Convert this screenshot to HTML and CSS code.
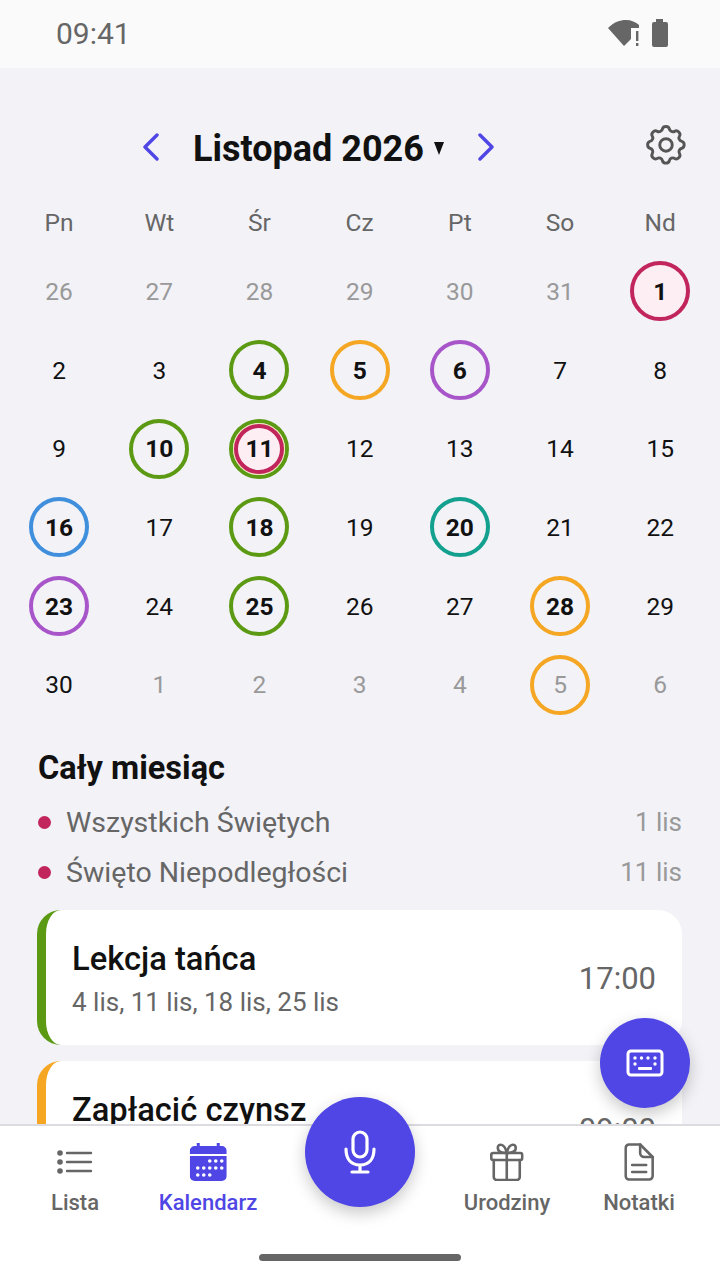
FILE: index.html
```html
<!DOCTYPE html>
<html>
<head>
  <meta charset="utf-8">
  <title>Kalendarz</title>
  <link rel="stylesheet" href="styles.css">
</head>
<body>
<div class="app">
  <div class="statusbar">
    <span class="clock">09:41</span>
    <div class="status-icons">
      <svg width="33" height="28" viewBox="0 0 33 28"><path d="M0 9C6 3 12 1 18 1c5 0 10 2 13 5v3h-8v11l-7 7Z" fill="#666"/><rect x="28" y="12" width="2.4" height="10" fill="#666"/><rect x="28" y="24" width="2.4" height="3" fill="#666"/></svg>
      <svg width="18" height="29" viewBox="0 0 18 29"><path d="M5 0h7v3h3a2 2 0 0 1 2 2v21a2 2 0 0 1-2 2H3a2 2 0 0 1-2-2V5a2 2 0 0 1 2-2h2Z" fill="#666"/></svg>
    </div>
  </div>

  <div class="main">
    <div class="cal-header">
      <div class="month-nav">
        <svg class="chev" width="16" height="28" viewBox="0 0 16 28"><path d="M14 2 2 14l12 12" fill="none" stroke="#4f46e5" stroke-width="3.4" stroke-linecap="round" stroke-linejoin="round"/></svg>
        <div class="month-title">Listopad 2026 <span class="caret"></span></div>
        <svg class="chev" width="16" height="28" viewBox="0 0 16 28"><path d="M2 2l12 12L2 26" fill="none" stroke="#4f46e5" stroke-width="3.4" stroke-linecap="round" stroke-linejoin="round"/></svg>
      </div>
      <svg class="gear" width="50" height="50" viewBox="0 0 24 24" fill="none" stroke="#555" stroke-width="1.4" stroke-linecap="round" stroke-linejoin="round"><path d="M10.3 3.3c.4-1.5 2.9-1.5 3.3 0a1.7 1.7 0 0 0 2.6 1.1c1.3-.8 3.1 1 2.3 2.3a1.7 1.7 0 0 0 1.1 2.6c1.5.4 1.5 2.900 0 3.300a1.7 1.7 0 0 0-1.1 2.600c.8 1.3-1 3.1-2.3 2.3a1.7 1.7 0 0 0-2.6 1.1c-.4 1.5-2.9 1.5-3.3 0a1.7 1.7 0 0 0-2.6-1.1c-1.3.8-3.1-1-2.3-2.3a1.7 1.7 0 0 0-1.1-2.6c-1.5-.4-1.5-2.900 0-3.300a1.7 1.7 0 0 0 1.1-2.600c-.8-1.3 1-3.1 2.3-2.3a1.7 1.7 0 0 0 2.6-1.1Z"/><circle cx="12" cy="11" r="3"/></svg>
    </div>

    <div class="grid weekdays">
      <span>Pn</span><span>Wt</span><span>Śr</span><span>Cz</span><span>Pt</span><span>So</span><span>Nd</span>
    </div>

    <div class="grid days">
      <div class="day off">26</div><div class="day off">27</div><div class="day off">28</div><div class="day off">29</div><div class="day off">30</div><div class="day off">31</div><div class="day"><span class="ring red">1</span></div>
      <div class="day">2</div><div class="day">3</div><div class="day"><span class="ring green">4</span></div><div class="day"><span class="ring orange">5</span></div><div class="day"><span class="ring purple">6</span></div><div class="day">7</div><div class="day">8</div>
      <div class="day">9</div><div class="day"><span class="ring green">10</span></div><div class="day"><span class="ring green"><span class="ring red inner">11</span></span></div><div class="day">12</div><div class="day">13</div><div class="day">14</div><div class="day">15</div>
      <div class="day"><span class="ring blue">16</span></div><div class="day">17</div><div class="day"><span class="ring green">18</span></div><div class="day">19</div><div class="day"><span class="ring teal">20</span></div><div class="day">21</div><div class="day">22</div>
      <div class="day"><span class="ring purple">23</span></div><div class="day">24</div><div class="day"><span class="ring green">25</span></div><div class="day">26</div><div class="day">27</div><div class="day"><span class="ring orange">28</span></div><div class="day">29</div>
      <div class="day">30</div><div class="day off">1</div><div class="day off">2</div><div class="day off">3</div><div class="day off">4</div><div class="day off"><span class="ring orange plain">5</span></div><div class="day off">6</div>
    </div>

    <div class="section">
      <h3>Cały miesiąc</h3>
      <div class="holiday"><i class="dot"></i><span class="holiday-name">Wszystkich Świętych</span><span class="holiday-date">1 lis</span></div>
      <div class="holiday"><i class="dot"></i><span class="holiday-name">Święto Niepodległości</span><span class="holiday-date">11 lis</span></div>
    </div>

    <div class="card card-green">
      <div class="card-body">
        <div class="card-title">Lekcja tańca</div>
        <div class="card-sub">4 lis, 11 lis, 18 lis, 25 lis</div>
      </div>
      <div class="card-time">17:00</div>
    </div>
    <div class="card card-orange">
      <div class="card-body">
        <div class="card-title">Zapłacić czynsz</div>
        <div class="card-sub">5 lis, 28 lis</div>
      </div>
      <div class="card-time">09:00</div>
    </div>
  </div>

  <div class="tabbar">
    <div class="tab tab-lista">
      <div class="tab-icon">
        <svg width="36" height="24" viewBox="0 0 36 24" fill="none" stroke="#666" stroke-width="2.4" stroke-linecap="round"><path d="M10 3h24M10 12h24M10 21h24"/><g fill="#666" stroke="none"><circle cx="3" cy="3" r="2.8"/><circle cx="3" cy="12" r="2.8"/><circle cx="3" cy="21" r="2.8"/></g></svg>
      </div>
      <span>Lista</span>
    </div>
    <div class="tab tab-kal active">
      <div class="tab-icon">
        <svg width="37" height="38" viewBox="0 0 37 38"><path d="M7 0h3v3h17V0h3v3h2a5 5 0 0 1 5 5v3H0V8a5 5 0 0 1 5-5h2Z" fill="#4f46e5"/><path d="M0 13h37v20a5 5 0 0 1-5 5H5a5 5 0 0 1-5-5Z" fill="#4f46e5"/><g fill="#fff"><circle cx="20" cy="18" r="1.8"/><circle cx="26" cy="18" r="1.8"/><circle cx="32" cy="18" r="1.8"/><circle cx="8" cy="25" r="1.8"/><circle cx="14" cy="25" r="1.8"/><circle cx="20" cy="25" r="1.8"/><circle cx="26" cy="25" r="1.8"/><circle cx="32" cy="25" r="1.8"/><circle cx="8" cy="32" r="1.8"/><circle cx="14" cy="32" r="1.8"/><circle cx="20" cy="32" r="1.8"/></g></svg>
      </div>
      <span>Kalendarz</span>
    </div>
    <div class="tab tab-uro">
      <div class="tab-icon">
        <svg width="34" height="38" viewBox="0 0 34 38" fill="none" stroke="#666" stroke-width="2.6" stroke-linecap="round" stroke-linejoin="round"><path d="M4 17v17a3 3 0 0 0 3 3h20a3 3 0 0 0 3-3V17"/><rect x="1.5" y="10" width="31" height="7" rx="2"/><path d="M17 10v27M17 10c-4 0-9-1-9-5 0-5 7-5 9 5ZM17 10c4 0 9-1 9-5 0-5-7-5-9 5Z"/></svg>
      </div>
      <span>Urodziny</span>
    </div>
    <div class="tab tab-not">
      <div class="tab-icon">
        <svg width="30" height="38" viewBox="0 0 30 38" fill="none" stroke="#666" stroke-width="2.6" stroke-linecap="round" stroke-linejoin="round"><path d="M5 1.5h11L28.500 14v19a3.500 3.500 0 0 1-3.500 3.500H5A3.500 3.500 0 0 1 1.500 33V5A3.500 3.500 0 0 1 5 1.500Z"/><path d="M16 1.5V10a4 4 0 0 0 4 4h8.500M8 22h14M8 29h14"/></svg>
      </div>
      <span>Notatki</span>
    </div>
  </div>

  <div class="fab fab-kbd">
    <svg width="38" height="28" viewBox="0 0 38 28" fill="none"><rect x="2" y="2" width="34" height="24" rx="3" stroke="#fff" stroke-width="3"/><g fill="#fff"><circle cx="9" cy="9" r="1.7"/><circle cx="15.5" cy="9" r="1.7"/><circle cx="22" cy="9" r="1.7"/><circle cx="29" cy="9" r="1.7"/><circle cx="9" cy="15" r="1.7"/><circle cx="29" cy="15" r="1.7"/><rect x="12" y="18" width="14" height="3" rx="1"/></g></svg>
  </div>
  <div class="fab fab-mic">
    <svg width="32" height="44" viewBox="0 0 32 44" fill="none" stroke="#fff" stroke-width="3.2" stroke-linecap="round"><rect x="9" y="2" width="14" height="25" rx="7"/><path d="M2 19c0 10 5 16 14 16s14-6 14-16M16 35v7M8 42h16"/></svg>
  </div>
  <div class="home-bar"></div>
</div>
</body>
</html>
```

FILE: styles.css
```css
* {
  box-sizing: border-box;
}
html, body {
  margin: 0;
  padding: 0;
}
body {
  font-family: Roboto, "Liberation Sans", sans-serif;
  background-color: #f2f2f7;
}
.app {
  position: relative;
  width: 720px;
  height: 1280px;
  display: flex;
  flex-direction: column;
  overflow: hidden;
}

.statusbar {
  height: 68px;
  flex: none;
  background-color: #fafafa;
  display: flex;
  justify-content: space-between;
  align-items: center;
  padding: 0 51px 2px 56px;
}
.clock {
  font-size: 30px;
  color: #666;
}
.status-icons {
  display: flex;
  align-items: center;
  gap: 10px;
}

.main {
  flex: 1;
  min-height: 0;
  overflow: hidden;
  padding-top: 54px;
}
.cal-header {
  position: relative;
  height: 50px;
  display: flex;
  align-items: center;
  padding-left: 143px;
}
.month-nav {
  display: flex;
  align-items: center;
  gap: 34px;
}
.month-title {
  font-size: 36px;
  font-weight: 700;
  color: #111;
  display: flex;
  align-items: center;
  gap: 10px;
  padding-top: 3px;
}
.caret {
  width: 0;
  height: 0;
  border-left: 5px solid transparent;
  border-right: 5px solid transparent;
  border-top: 13px solid #111;
}
.gear {
  position: absolute;
  right: 29px;
  top: 0;
}

.grid {
  display: grid;
  grid-template-columns: repeat(7, 100.2px);
  padding-left: 9px;
}
.weekdays {
  margin-top: 25px;
  height: 50px;
  align-items: center;
  text-align: center;
  font-size: 24.5px;
  color: #666;
}
.days {
  grid-auto-rows: 78.7px;
  margin-top: 5px;
}
.day {
  display: flex;
  justify-content: center;
  align-items: center;
  font-size: 24.5px;
  color: #111;
}
.day.off {
  color: #999;
}
.ring {
  width: 60px;
  height: 60px;
  border-radius: 50%;
  border: 4px solid #999;
  display: flex;
  justify-content: center;
  align-items: center;
  font-weight: 700;
  color: #111;
}
.ring.plain {
  font-weight: 400;
  color: #999;
}
.red {
  border-color: #c2255c;
  background-color: #fdeef4;
}
.green {
  border-color: #5c9a14;
}
.orange {
  border-color: #f5a623;
}
.purple {
  border-color: #a855c9;
}
.blue {
  border-color: #3f8fdc;
}
.teal {
  border-color: #14a08f;
}
.ring.inner {
  width: 50px;
  height: 50px;
  flex: none;
  box-shadow: 0 0 0 1px #f0e3b8;
}

.section {
  margin: 0 38px;
  padding-top: 24px;
}
.section h3 {
  margin: 0 0 9px;
  font-size: 32.5px;
  line-height: 40px;
  font-weight: 700;
  color: #111;
}
.holiday {
  height: 50px;
  display: flex;
  align-items: center;
  font-size: 28.5px;
  color: #666;
}
.dot {
  width: 13px;
  height: 13px;
  border-radius: 50%;
  background-color: #c2255c;
  margin-right: 15px;
}
.holiday-name {
  flex: 1;
}
.holiday-date {
  font-size: 26px;
  color: #999;
}
.card {
  margin: 13px 38px 16px 37px;
  height: 135px;
  background-color: #fff;
  border-radius: 24px;
  border-left: 9px solid #999;
  display: flex;
  align-items: center;
  justify-content: space-between;
  padding: 0 26px;
}
.card + .card {
  margin-top: 0;
}
.card-green {
  border-left-color: #5c9a14;
}
.card-orange {
  border-left-color: #f5a623;
}
.card-title {
  font-size: 32.7px;
  font-weight: 500;
  color: #111;
  line-height: 44px;
}
.card-sub {
  margin-top: 4px;
  font-size: 26px;
  color: #666;
  line-height: 34px;
}
.card-time {
  font-size: 31px;
  color: #666;
  padding-top: 2px;
}

.tabbar {
  flex: none;
  height: 156px;
  position: relative;
  background-color: #fff;
  border-top: 2px solid #dcdce0;
}
.tab {
  position: absolute;
  top: 17px;
  display: flex;
  flex-direction: column;
  align-items: center;
  gap: 9px;
  font-size: 22px;
  line-height: 26px;
  font-weight: 500;
  color: #666;
  transform: translateX(-50%);
}
.tab.active {
  color: #4f46e5;
}
.tab-icon {
  height: 38px;
  display: flex;
  align-items: center;
}
.tab-lista { left: 75px; }
.tab-kal { left: 208px; }
.tab-uro { left: 507px; }
.tab-not { left: 639px; }

.fab {
  position: absolute;
  display: flex;
  justify-content: center;
  align-items: center;
  border-radius: 50%;
  background-color: #4f46e5;
  box-shadow: 0 6px 16px rgba(0, 0, 0, 0.22);
}
.fab-kbd {
  left: 600px;
  top: 1018px;
  width: 90px;
  height: 90px;
}
.fab-mic {
  left: 305px;
  top: 1097px;
  width: 110px;
  height: 110px;
}
.home-bar {
  position: absolute;
  left: 259px;
  top: 1254px;
  width: 202px;
  height: 7px;
  border-radius: 4px;
  background-color: #666;
}
```
